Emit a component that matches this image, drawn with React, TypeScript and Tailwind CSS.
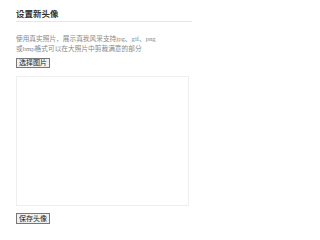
export default function App() {
  return (
    <div className="w-[205px] h-[235px] bg-white pl-4 pt-[8px] font-['Liberation_Sans','Noto_Sans_CJK_SC',sans-serif]">
      <div className="w-[176px] border-b border-[#e6e6e6] pb-[1px]">
        <h2 className="text-[8.5px] leading-[12px] font-bold text-[#333]">设置新头像</h2>
      </div>
      <p className="mt-[12px] text-[6.7px] leading-[9.5px] text-[#888]">
        使用真实照片，展示真我风采支持<span className="font-['Liberation_Serif','Noto_Sans_CJK_SC',serif]">jpg、gif、png</span>
        <br />
        或<span className="font-['Liberation_Serif',serif]">bmp</span>格式可以在大照片中剪裁满意的部分
      </p>
      <button className="mt-[5px] block h-[10px] px-[2px] border border-[#777] bg-[#f0f0f0] text-[7px] leading-[8px] text-[#222]">
        选择图片
      </button>
      <div className="mt-[8px] w-[173px] h-[130px] border border-[#eee] bg-white" />
      <button className="mt-[7px] block h-[11px] px-[2px] border border-[#777] bg-[#f0f0f0] text-[7px] leading-[9px] text-[#222]">
        保存头像
      </button>
    </div>
  );
}
